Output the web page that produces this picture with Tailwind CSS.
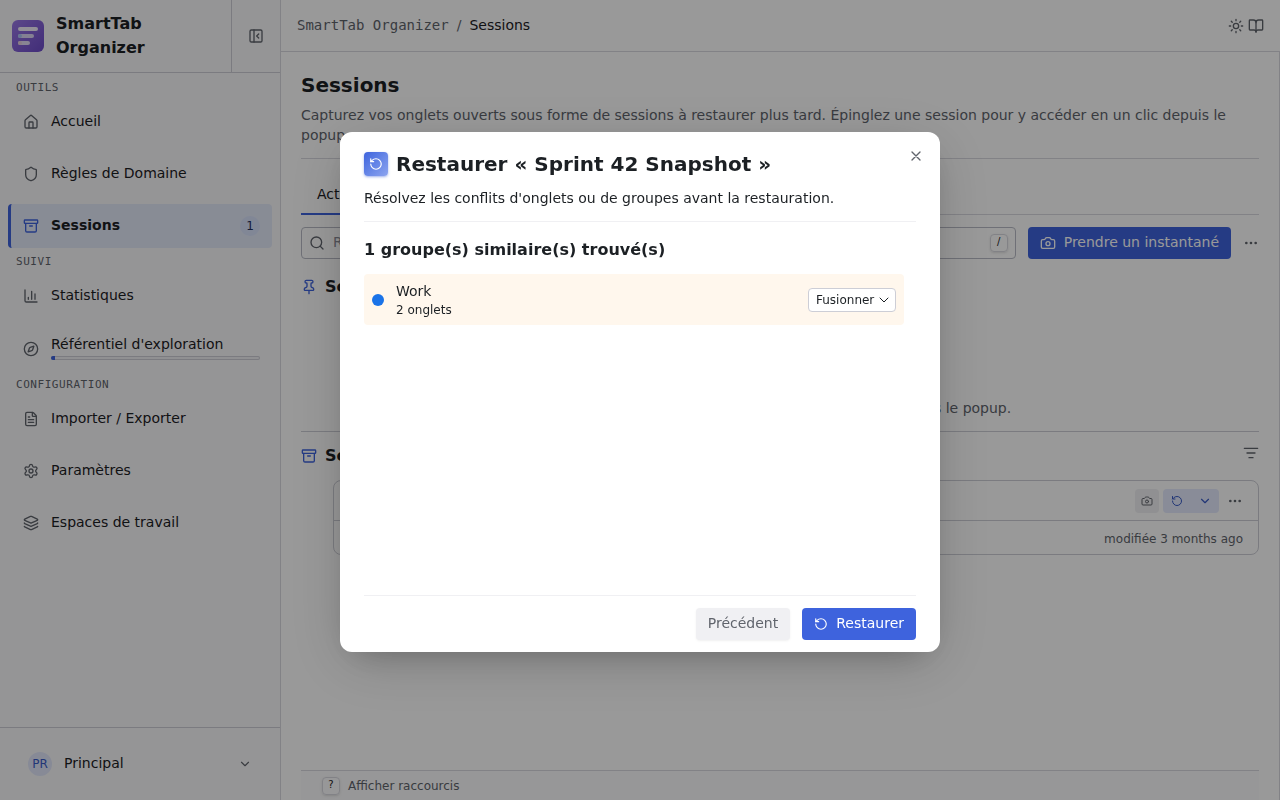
<!DOCTYPE html>
<html lang="fr">

<head>
  <meta charset="UTF-8" />
  <meta name="viewport" content="width=device-width, initial-scale=1.0" />
  <title>SmartTab Organizer - Sessions</title>

  <!-- Tailwind CSS -->
  <script src="https://cdn.jsdelivr.net/npm/@tailwindcss/browser@4"></script>
</head>

<body class="font-['DejaVu_Sans',sans-serif] text-sm text-[#1c2024] bg-white">

  <!-- Icônes réutilisées -->
  <svg class="hidden">
    <symbol id="i-archive" viewBox="0 0 24 24">
      <rect width="20" height="5" x="2" y="3" rx="1" />
      <path d="M4 8v11a2 2 0 0 0 2 2h12a2 2 0 0 0 2-2V8M10 12h4" />
    </symbol>
    <symbol id="i-camera" viewBox="0 0 24 24">
      <path d="M13.997 4a2 2 0 0 1 1.76 1.05l.486.9A2 2 0 0 0 18.003 7H20a2 2 0 0 1 2 2v9a2 2 0 0 1-2 2H4a2 2 0 0 1-2-2V9a2 2 0 0 1 2-2h1.997a2 2 0 0 0 1.759-1.048l.489-.904A2 2 0 0 1 10.004 4z" />
      <circle cx="12" cy="13" r="3" />
    </symbol>
    <symbol id="i-restore" viewBox="0 0 24 24">
      <path d="M3 12a9 9 0 1 0 9-9 9.75 9.75 0 0 0-6.74 2.74L3 8" />
      <path d="M3 3v5h5" />
    </symbol>
    <symbol id="i-chevron" viewBox="0 0 24 24">
      <path d="m6 9 6 6 6-6" />
    </symbol>
    <symbol id="i-dots" viewBox="0 0 24 24">
      <circle cx="12" cy="12" r="1" />
      <circle cx="19" cy="12" r="1" />
      <circle cx="5" cy="12" r="1" />
    </symbol>
  </svg>

  <div class="flex h-screen overflow-hidden">

    <!-- Barre latérale -->
    <aside class="w-[281px] shrink-0 flex flex-col bg-[#f9f9fb] border-r border-[#d9d9e0]">
      <div class="flex border-b border-[#cdced6]">
        <div class="flex-1 flex items-center gap-3 px-3 py-3">
          <svg class="w-8 h-8 shrink-0" viewBox="0 0 32 32">
            <defs>
              <linearGradient id="logo" x1="0" y1="0" x2="1" y2="1">
                <stop offset="0" stop-color="#9a78e6" />
                <stop offset="1" stop-color="#6d4bc8" />
              </linearGradient>
            </defs>
            <rect width="32" height="32" rx="6" fill="url(#logo)" />
            <rect x="6" y="7" width="20" height="4" rx="2" fill="#f3effc" />
            <rect x="6" y="14" width="16" height="4" rx="2" fill="#ddd6f5" />
            <rect x="6" y="21" width="12" height="4" rx="2" fill="#e3dcf5" />
            <circle cx="8" cy="16" r="2" fill="#a9c4f5" />
            <circle cx="8" cy="23" r="2" fill="#e6cfdf" />
          </svg>
          <span class="text-base leading-6 font-bold">SmartTab Organizer</span>
        </div>
        <button class="w-[49px] border-l border-[#cdced6] flex items-center justify-center text-[#60646c]" aria-label="Réduire le menu">
          <svg class="w-4 h-4" viewBox="0 0 24 24" fill="none" stroke="currentColor" stroke-width="2" stroke-linecap="round" stroke-linejoin="round">
            <rect width="18" height="18" x="3" y="3" rx="2" />
            <path d="M9 3v18M16 15l-3-3 3-3" />
          </svg>
        </button>
      </div>

      <nav class="flex-1 px-2 pt-px">
        <h2 class="h-[26px] px-2 pt-0.5 flex items-center font-['DejaVu_Sans_Mono',monospace] text-[11px] tracking-wider text-[#60646c]">OUTILS</h2>
        <div class="flex flex-col gap-2">
          <a href="#" class="h-11 pl-[15px] pr-3 flex items-center gap-3">
            <svg class="w-4 h-4 text-[#60646c]" viewBox="0 0 24 24" fill="none" stroke="currentColor" stroke-width="2" stroke-linecap="round" stroke-linejoin="round">
              <path d="M15 21v-8a1 1 0 0 0-1-1h-4a1 1 0 0 0-1 1v8" />
              <path d="M3 10a2 2 0 0 1 .709-1.528l7-6a2 2 0 0 1 2.582 0l7 6A2 2 0 0 1 21 10v9a2 2 0 0 1-2 2H5a2 2 0 0 1-2-2z" />
            </svg>
            <span class="pb-0.5">Accueil</span>
          </a>
          <a href="#" class="h-11 pl-[15px] pr-3 flex items-center gap-3">
            <svg class="w-4 h-4 text-[#60646c]" viewBox="0 0 24 24" fill="none" stroke="currentColor" stroke-width="2" stroke-linecap="round" stroke-linejoin="round">
              <path d="M20 13c0 5-3.500 7.500-7.660 8.950a1 1 0 0 1-.67-.01C7.500 20.500 4 18 4 13V6a1 1 0 0 1 1-1c2 0 4.500-1.200 6.240-2.720a1.170 1.170 0 0 1 1.520 0C14.510 3.810 17 5 19 5a1 1 0 0 1 1 1z" />
            </svg>
            <span class="pb-0.5">Règles de Domaine</span>
          </a>
          <a href="#" class="h-11 pl-3 pr-3 flex items-center gap-3 rounded-sm border-l-3 border-[#3e63dd] bg-[#e3e9f9] font-bold">
            <svg class="w-4 h-4 text-[#3e63dd]" fill="none" stroke="currentColor" stroke-width="2" stroke-linecap="round" stroke-linejoin="round"><use href="#i-archive" /></svg>
            <span class="flex-1 pb-0.5">Sessions</span>
            <span class="w-5 h-5 rounded-full bg-[#d8e1fb] text-xs font-normal text-[#1f2d5c] flex items-center justify-center">1</span>
          </a>
        </div>

        <h2 class="h-[26px] px-2 pt-0.5 flex items-center font-['DejaVu_Sans_Mono',monospace] text-[11px] tracking-wider text-[#60646c]">SUIVI</h2>
        <div class="flex flex-col gap-2">
          <a href="#" class="h-11 pl-[15px] pr-3 flex items-center gap-3">
            <svg class="w-4 h-4 text-[#60646c]" viewBox="0 0 24 24" fill="none" stroke="currentColor" stroke-width="2" stroke-linecap="round" stroke-linejoin="round">
              <path d="M3 3v16a2 2 0 0 0 2 2h16M18 17V9M13 17V5M8 17v-3" />
            </svg>
            <span class="pb-0.5">Statistiques</span>
          </a>
          <a href="#" class="h-[45px] pl-[15px] pr-3 flex items-center gap-3">
            <svg class="w-4 h-4 text-[#60646c]" viewBox="0 0 24 24" fill="none" stroke="currentColor" stroke-width="2" stroke-linecap="round" stroke-linejoin="round">
              <circle cx="12" cy="12" r="10" />
              <path d="m16.240 7.760-1.804 5.411a2 2 0 0 1-1.265 1.265L7.760 16.240l1.804-5.411a2 2 0 0 1 1.265-1.265z" />
            </svg>
            <span class="flex-1 pb-1 flex flex-col gap-0.5">
              <span class="leading-5">Référentiel d'exploration</span>
              <span class="h-1 rounded-full bg-[#f0f0f3] ring-1 ring-inset ring-[#cdced6] overflow-hidden">
                <span class="block h-full bg-[#3e63dd]" style="width: 2%"></span>
              </span>
            </span>
          </a>
        </div>

        <h2 class="h-[26px] px-2 pt-0.5 flex items-center font-['DejaVu_Sans_Mono',monospace] text-[11px] tracking-wider text-[#60646c]">CONFIGURATION</h2>
        <div class="flex flex-col gap-2">
          <a href="#" class="h-11 pl-[15px] pr-3 flex items-center gap-3">
            <svg class="w-4 h-4 text-[#60646c]" viewBox="0 0 24 24" fill="none" stroke="currentColor" stroke-width="2" stroke-linecap="round" stroke-linejoin="round">
              <path d="M6 22a2 2 0 0 1-2-2V4a2 2 0 0 1 2-2h8a2.400 2.400 0 0 1 1.704.706l3.588 3.588A2.400 2.400 0 0 1 20 8v12a2 2 0 0 1-2 2z" />
              <path d="M14 2v5a1 1 0 0 0 1 1h5M10 9H8M16 13H8M16 17H8" />
            </svg>
            <span class="pb-0.5">Importer / Exporter</span>
          </a>
          <a href="#" class="h-11 pl-[15px] pr-3 flex items-center gap-3">
            <svg class="w-4 h-4 text-[#60646c]" viewBox="0 0 24 24" fill="none" stroke="currentColor" stroke-width="2" stroke-linecap="round" stroke-linejoin="round">
              <path d="M9.671 4.136a2.340 2.340 0 0 1 4.659 0 2.340 2.340 0 0 0 3.319 1.915 2.340 2.340 0 0 1 2.330 4.033 2.340 2.340 0 0 0 0 3.831 2.340 2.340 0 0 1-2.330 4.033 2.340 2.340 0 0 0-3.319 1.915 2.340 2.340 0 0 1-4.659 0 2.340 2.340 0 0 0-3.320-1.915 2.340 2.340 0 0 1-2.330-4.033 2.340 2.340 0 0 0 0-3.831A2.340 2.340 0 0 1 6.350 6.051a2.340 2.340 0 0 0 3.319-1.915" />
              <circle cx="12" cy="12" r="3" />
            </svg>
            <span class="pb-0.5">Paramètres</span>
          </a>
          <a href="#" class="h-11 pl-[15px] pr-3 flex items-center gap-3">
            <svg class="w-4 h-4 text-[#60646c]" viewBox="0 0 24 24" fill="none" stroke="currentColor" stroke-width="2" stroke-linecap="round" stroke-linejoin="round">
              <path d="M12.830 2.180a2 2 0 0 0-1.660 0L2.600 6.080a1 1 0 0 0 0 1.830l8.580 3.910a2 2 0 0 0 1.660 0l8.580-3.900a1 1 0 0 0 0-1.830z" />
              <path d="M2 12a1 1 0 0 0 .58.91l8.600 3.910a2 2 0 0 0 1.650 0l8.580-3.900A1 1 0 0 0 22 12" />
              <path d="M2 17a1 1 0 0 0 .58.91l8.600 3.910a2 2 0 0 0 1.650 0l8.580-3.900A1 1 0 0 0 22 17" />
            </svg>
            <span class="pb-0.5">Espaces de travail</span>
          </a>
        </div>
      </nav>

      <!-- Profil -->
      <div class="border-t border-[#cdced6] p-4">
        <button class="w-full h-10 px-3 flex items-center gap-3">
          <span class="w-6 h-6 rounded-full bg-[#e1e7fb] text-[#3a5bc7] text-xs flex items-center justify-center">PR</span>
          <span class="flex-1 pb-0.5 text-left">Principal</span>
          <svg class="w-3.5 h-3.5 text-[#60646c]" fill="none" stroke="currentColor" stroke-width="2" stroke-linecap="round" stroke-linejoin="round"><use href="#i-chevron" /></svg>
        </button>
      </div>
    </aside>

    <div class="flex-1 min-w-0 flex flex-col">
      <!-- Fil d'Ariane -->
      <header class="h-[52px] shrink-0 px-4 flex items-center justify-between border-b border-[#d9d9e0]">
        <div class="flex items-center gap-2 pb-0.5">
          <a href="#" class="font-['DejaVu_Sans_Mono',monospace] text-[#60646c]">SmartTab Organizer</a>
          <span class="text-[#60646c]">/</span>
          <span>Sessions</span>
        </div>
        <div class="flex items-center gap-1 text-[#60646c]">
          <button aria-label="Thème">
            <svg class="block w-4 h-4" viewBox="0 0 24 24" fill="none" stroke="currentColor" stroke-width="2" stroke-linecap="round" stroke-linejoin="round">
              <circle cx="12" cy="12" r="4" />
              <path d="M12 2v2M12 20v2M4.930 4.930l1.410 1.410M17.660 17.660l1.410 1.410M2 12h2M20 12h2M6.340 17.660l-1.410 1.410M19.070 4.930l-1.410 1.410" />
            </svg>
          </button>
          <button aria-label="Documentation">
            <svg class="block w-4 h-4" viewBox="0 0 24 24" fill="none" stroke="currentColor" stroke-width="2" stroke-linecap="round" stroke-linejoin="round">
              <path d="M12 7v14" />
              <path d="M3 18a1 1 0 0 1-1-1V4a1 1 0 0 1 1-1h5a4 4 0 0 1 4 4 4 4 0 0 1 4-4h5a1 1 0 0 1 1 1v13a1 1 0 0 1-1 1h-6a3 3 0 0 0-3 3 3 3 0 0 0-3-3z" />
            </svg>
          </button>
        </div>
      </header>

      <main class="flex-1 min-h-0 px-5 border-r border-[#d9d9e0] flex flex-col">
        <div class="flex-1">
          <div class="pt-5 pb-[13px] border-b border-[#d9d9e0]">
            <h1 class="text-xl leading-[26px] font-bold">Sessions</h1>
            <p class="mt-[7px] leading-5 text-[#60646c]">Capturez vos onglets ouverts sous forme de sessions à restaurer plus tard. Épinglez une session pour y accéder en un clic depuis le popup.</p>
          </div>

          <!-- Onglets -->
          <div class="pt-4 flex border-b border-[#d9d9e0]">
            <button class="h-10 px-4 -mb-px border-b-2 border-[#3e63dd]">Actives</button>
            <button class="h-10 px-4 -mb-px text-[#60646c]">Archives</button>
          </div>

          <!-- Recherche et actions -->
          <div class="mt-3 flex items-center">
            <label class="flex-1 h-8 px-[7px] flex items-center gap-2 rounded-sm border border-[#b9bbc6]">
              <svg class="w-4 h-4 text-[#60646c]" viewBox="0 0 24 24" fill="none" stroke="currentColor" stroke-width="2" stroke-linecap="round" stroke-linejoin="round">
                <circle cx="11" cy="11" r="8" />
                <path d="m21 21-4.340-4.340" />
              </svg>
              <input type="search" placeholder="Rechercher une session..." aria-label="Rechercher" class="flex-1 pb-0.5 outline-none placeholder:text-[#8b8d98]" />
              <kbd class="w-[18px] h-[18px] rounded border border-[#d9d9e0] shadow-sm font-['DejaVu_Sans',sans-serif] text-[10px] leading-[14px] text-center">/</kbd>
            </label>
            <button class="ml-3 h-8 px-3 rounded-sm bg-[#3e63dd] text-white flex items-center gap-2">
              <svg class="w-4 h-4" fill="none" stroke="currentColor" stroke-width="2" stroke-linecap="round" stroke-linejoin="round"><use href="#i-camera" /></svg>
              <span class="pb-0.5">Prendre un instantané</span>
            </button>
            <button class="ml-3" aria-label="Plus d'actions">
              <svg class="block w-4 h-4 text-[#60646c]" fill="none" stroke="currentColor" stroke-width="2" stroke-linecap="round" stroke-linejoin="round"><use href="#i-dots" /></svg>
            </button>
          </div>

          <!-- Sessions épinglées -->
          <section class="mt-4 border-b border-[#cdced6]">
            <h2 class="flex items-center gap-2 text-base leading-6 font-bold">
              <svg class="w-4 h-4 text-[#3e63dd]" viewBox="0 0 24 24" fill="none" stroke="currentColor" stroke-width="2" stroke-linecap="round" stroke-linejoin="round">
                <path d="M12 17v5M9 10.760a2 2 0 0 1-1.110 1.790l-1.780.9A2 2 0 0 0 5 15.240V16a1 1 0 0 0 1 1h12a1 1 0 0 0 1-1v-.76a2 2 0 0 0-1.110-1.790l-1.780-.9A2 2 0 0 1 15 10.760V7a1 1 0 0 1 1-1 2 2 0 0 0 0-4H8a2 2 0 0 0 0 4 1 1 0 0 1 1 1z" />
              </svg>
              Sessions épinglées
            </h2>
            <div class="pt-[99px] pb-[13px] text-center leading-5 text-[#60646c]">Épinglez une session pour y accéder rapidement depuis le popup.</div>
          </section>

          <!-- Sessions -->
          <section class="pt-3">
            <div class="flex items-center justify-between">
              <h2 class="flex items-center gap-2 text-base leading-6 font-bold">
                <svg class="w-4 h-4 text-[#3e63dd]" fill="none" stroke="currentColor" stroke-width="2" stroke-linecap="round" stroke-linejoin="round"><use href="#i-archive" /></svg>
                Sessions
              </h2>
              <button class="pb-1.5" aria-label="Trier">
                <svg class="block w-4 h-4 text-[#60646c]" viewBox="0 0 24 24" fill="none" stroke="currentColor" stroke-width="2" stroke-linecap="round" stroke-linejoin="round">
                  <path d="M2 5h20M6 12h12M9 19h6" />
                </svg>
              </button>
            </div>

            <article class="mt-3 ml-8 rounded-lg border border-[#cdced6]">
              <div class="h-10 pl-4 pr-[15px] flex items-center justify-between border-b border-[#cdced6]">
                <span class="font-bold">Sprint 42 Snapshot</span>
                <div class="flex items-center">
                  <button class="w-6 h-6 rounded-sm bg-[#f0f0f3] text-[#60646c] flex items-center justify-center" aria-label="Capturer">
                    <svg class="w-3 h-3" fill="none" stroke="currentColor" stroke-width="2" stroke-linecap="round" stroke-linejoin="round"><use href="#i-camera" /></svg>
                  </button>
                  <div class="ml-1 flex rounded-sm bg-[#e4eafd] text-[#3a5bc7]">
                    <button class="w-7 h-6 flex items-center justify-center" aria-label="Restaurer">
                      <svg class="w-3 h-3" fill="none" stroke="currentColor" stroke-width="2" stroke-linecap="round" stroke-linejoin="round"><use href="#i-restore" /></svg>
                    </button>
                    <button class="w-7 h-6 flex items-center justify-center" aria-label="Options de restauration">
                      <svg class="w-3.5 h-3.5" fill="none" stroke="currentColor" stroke-width="2" stroke-linecap="round" stroke-linejoin="round"><use href="#i-chevron" /></svg>
                    </button>
                  </div>
                  <button class="ml-2" aria-label="Plus d'actions">
                    <svg class="block w-4 h-4 text-[#60646c]" fill="none" stroke="currentColor" stroke-width="2" stroke-linecap="round" stroke-linejoin="round"><use href="#i-dots" /></svg>
                  </button>
                </div>
              </div>
              <div class="h-[33px] pl-4 pr-[15px] pt-0.5 flex items-center justify-between text-xs text-[#60646c]">
                <span>2 onglets</span>
                <span>modifiée 3 months ago</span>
              </div>
            </article>
          </section>
        </div>

        <footer class="h-[30px] px-[21px] flex items-center gap-2 border-t border-[#d9d9e0] bg-[#fcfcfd] text-xs text-[#60646c]">
          <kbd class="w-[18px] h-[18px] rounded border border-[#d9d9e0] shadow-sm font-['DejaVu_Sans',sans-serif] text-[10px] leading-[14px] text-[#1c2024] text-center">?</kbd>
          Afficher raccourcis
        </footer>
      </main>
    </div>
  </div>

  <!-- Fenêtre de restauration -->
  <div class="fixed inset-0 bg-black/40 pb-4 flex items-center justify-center">
    <div role="dialog" aria-labelledby="dialog-title" class="relative w-[600px] h-[520px] px-6 pt-5 pb-3 flex flex-col bg-white rounded-xl shadow-[0_12px_60px_rgba(0,0,0,0.15),0_12px_32px_-16px_rgba(0,0,0,0.3)]">
      <div class="flex items-center gap-2">
        <span class="w-6 h-6 rounded-sm bg-linear-to-br from-[#3e63dd] to-[#8da4ef] shadow-sm shadow-[#3e63dd]/40 text-white flex items-center justify-center">
          <svg class="w-3.5 h-3.5" fill="none" stroke="currentColor" stroke-width="2" stroke-linecap="round" stroke-linejoin="round"><use href="#i-restore" /></svg>
        </span>
        <h2 id="dialog-title" class="text-xl leading-6 font-bold">Restaurer « Sprint 42 Snapshot »</h2>
      </div>
      <button class="absolute top-4 right-4 text-[#60646c]" aria-label="Fermer">
        <svg class="block w-4 h-4" viewBox="0 0 24 24" fill="none" stroke="currentColor" stroke-width="2" stroke-linecap="round" stroke-linejoin="round">
          <path d="M18 6 6 18M6 6l12 12" />
        </svg>
      </button>
      <p class="mt-3 pb-[13px] leading-5 border-b border-[#f0f0f3]">Résolvez les conflits d'onglets ou de groupes avant la restauration.</p>

      <div class="flex-1 pt-4 pr-3">
        <h3 class="text-base leading-6 font-bold">1 groupe(s) similaire(s) trouvé(s)</h3>
        <div class="mt-3 px-2 py-[7px] flex items-center gap-3 rounded-sm bg-[#fff7ed]">
          <span class="w-3 h-3 rounded-full bg-[#1a73e8]"></span>
          <div class="flex-1 flex flex-col gap-px">
            <div class="leading-5">Work</div>
            <div class="text-xs leading-4">2 onglets</div>
          </div>
          <div class="relative w-[88px]">
            <select aria-label="Action pour Work" class="block w-full h-6 px-[7px] appearance-none rounded-sm border border-[#cdced6] bg-white text-xs">
              <option>Fusionner</option>
              <option>Créer</option>
              <option>Ignorer</option>
            </select>
            <svg class="absolute right-1 top-1 w-4 h-4 pointer-events-none" fill="none" stroke="currentColor" stroke-width="1.5" stroke-linecap="round" stroke-linejoin="round"><use href="#i-chevron" /></svg>
          </div>
        </div>
      </div>

      <div class="pt-3 flex justify-end gap-3 border-t border-[#f0f0f3]">
        <button class="h-8 px-3 pb-0.5 rounded-sm bg-[#f0f0f3] shadow-sm shadow-black/5 text-[#60646c]">Précédent</button>
        <button class="h-8 px-3 rounded-sm bg-[#3e63dd] text-white flex items-center gap-2">
          <svg class="w-3.5 h-3.5" fill="none" stroke="currentColor" stroke-width="2" stroke-linecap="round" stroke-linejoin="round"><use href="#i-restore" /></svg>
          <span class="pb-0.5">Restaurer</span>
        </button>
      </div>
    </div>
  </div>
</body>

</html>
